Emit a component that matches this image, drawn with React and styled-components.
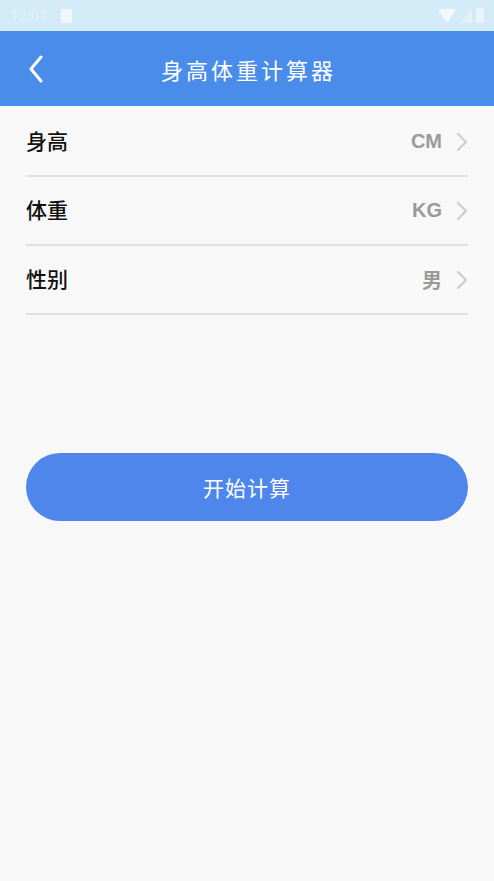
import React from 'react'
import styled, { createGlobalStyle } from 'styled-components'

const GlobalStyle = createGlobalStyle`
  html, body {
    margin: 0;
    padding: 0;
    background: #f8f8f8;
    font-family: "Noto Sans CJK SC", "Noto Sans", sans-serif;
  }
`

const rows = [
  { label: '身高', value: 'CM' },
  { label: '体重', value: 'KG' },
  { label: '性别', value: '男' }
]

const BackIcon = () => (
  <svg width="16" height="28" viewBox="0 0 16 28">
    <path d="M13 2 L3 14 L13 26" fill="none" stroke="#fff" strokeWidth="3" strokeLinecap="round" strokeLinejoin="round" />
  </svg>
)

const Chevron = () => (
  <svg width="12" height="20" viewBox="0 0 12 20">
    <path d="M2 2 L10 10 L2 18" fill="none" stroke="#cfcfcf" strokeWidth="2.4" strokeLinecap="round" strokeLinejoin="round" />
  </svg>
)

const App = () => (
  <Page>
    <GlobalStyle />
    <StatusBar>
      <StatusLeft>
        <Clock>12:01</Clock>
        <SdCard />
      </StatusLeft>
      <StatusRight>
        <svg width="18" height="14" viewBox="0 0 18 14">
          <path d="M0 1 Q9 -3 18 1 L9 14 Z" fill="#fff" opacity="0.7" />
        </svg>
        <svg width="12" height="14" viewBox="0 0 12 14">
          <path d="M12 0 L12 14 L0 14 Z" fill="#fff" opacity="0.35" />
        </svg>
        <Battery />
      </StatusRight>
    </StatusBar>

    <Header>
      <Back><BackIcon /></Back>
      <Title>身高体重计算器</Title>
    </Header>

    <List>
      {rows.map(r => (
        <Row key={r.label}>
          <Label>{r.label}</Label>
          <Value>{r.value}</Value>
          <Chevron />
        </Row>
      ))}
    </List>

    <Button>开始计算</Button>
  </Page>
)

const Page = styled.div`
  min-height: 881px;
  background: #f8f8f8;
`

const StatusBar = styled.div`
  height: 31px;
  background: #d3ebf7;
  display: flex;
  align-items: center;
  justify-content: space-between;
  padding: 0 10px;
  box-sizing: border-box;
`

const StatusLeft = styled.div`
  display: flex;
  align-items: center;
  gap: 14px;
`

const Clock = styled.span`
  color: #fff;
  opacity: 0.4;
  font-size: 15px;
  font-family: Roboto, sans-serif;
`

const SdCard = styled.div`
  width: 11px;
  height: 14px;
  background: #fff;
  opacity: 0.6;
  border-radius: 1px;
`

const StatusRight = styled.div`
  display: flex;
  align-items: center;
  gap: 4px;
`

const Battery = styled.div`
  width: 8px;
  height: 15px;
  background: #fff;
  opacity: 0.45;
  border-radius: 1px;
`

const Header = styled.div`
  height: 75px;
  background: #4a8ce9;
  display: flex;
  align-items: center;
  justify-content: center;
  position: relative;
`

const Back = styled.div`
  position: absolute;
  left: 28px;
  top: 50%;
  transform: translateY(-50%);
  display: flex;
`

const Title = styled.div`
  color: #fff;
  font-size: 22px;
  letter-spacing: 3px;
  margin-left: 3px;
`

const List = styled.div`
  padding: 2px 26px 0;
`

const Row = styled.div`
  height: 69px;
  display: flex;
  align-items: center;
  border-bottom: 2px solid #e0e0e0;
  box-sizing: border-box;
`

const Label = styled.div`
  flex: 1;
  font-size: 21px;
  font-weight: 500;
  color: #111;
  margin-bottom: 3px;
`

const Value = styled.div`
  font-family: "Liberation Sans", "Noto Sans CJK SC", sans-serif;
  font-size: 20px;
  font-weight: 700;
  color: #9a9a9a;
  margin-right: 14px;
`

const Button = styled.div`
  margin: 138px 26px 0;
  height: 68px;
  border-radius: 34px;
  background: #4f86ec;
  color: #fff;
  font-size: 21px;
  letter-spacing: 1px;
  display: flex;
  align-items: center;
  justify-content: center;
`

export default App
